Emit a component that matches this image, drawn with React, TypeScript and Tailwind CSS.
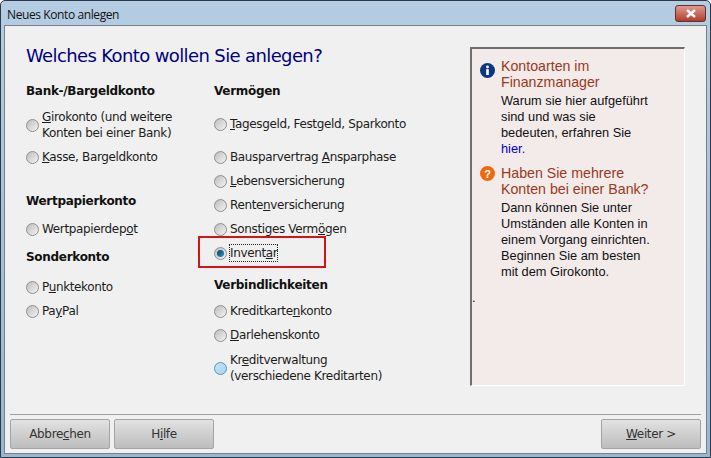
import type { ReactNode } from 'react'

const uiFont = { fontFamily: '"DejaVu Sans", sans-serif' }

function Radio({ checked, hover }: { checked?: boolean; hover?: boolean }) {
  const bg = hover
    ? 'bg-gradient-to-br from-[#c5e4f7] to-[#a3d5f2] border-[#5a93b5]'
    : 'bg-gradient-to-br from-[#bdbdbd] to-[#f4f4f4] border-[#8e8f8f]'
  return (
    <span className={`flex h-[13px] w-[13px] shrink-0 items-center justify-center rounded-full border ${bg}`}>
      {checked && <span className="h-[7px] w-[7px] rounded-full bg-gradient-to-br from-[#0f3f5f] to-[#2a9ad0]" />}
    </span>
  )
}

function Option({ children, checked, hover, className = '' }: { children: ReactNode; checked?: boolean; hover?: boolean; className?: string }) {
  return (
    <div className={`flex items-center gap-[3px] ${className}`}>
      <Radio checked={checked} hover={hover} />
      <span className="text-[12px] leading-[16px] tracking-[-0.36px] text-[#1c1c1c]">{children}</span>
    </div>
  )
}

function Heading({ children, className = '' }: { children: ReactNode; className?: string }) {
  return <div className={`text-[12px] font-bold leading-[16px] tracking-[-0.3px] text-[#111] ${className}`}>{children}</div>
}

function Btn({ children, className = '' }: { children: ReactNode; className?: string }) {
  return (
    <button className={`h-[30px] w-[100px] rounded-[2px] border border-[#a4a4a4] bg-gradient-to-b from-[#e2e2e2] to-[#bdbdbd] text-[12px] tracking-[-0.36px] text-[#333] ${className}`}>
      {children}
    </button>
  )
}

export default function App() {
  return (
    <div className="flex h-[458px] w-[711px] flex-col overflow-hidden rounded-t-[5px] border border-[#2b3a46] bg-gradient-to-b from-[#b4cde3] to-[#97b7d3]" style={uiFont}>
      <div className="flex h-[24px] shrink-0 items-start justify-between pl-[6px] pr-[4px]">
        <span className="mt-[6px] text-[12px] leading-[16px] tracking-[-0.4px] text-[#111]" style={{ fontFamily: '"Open Sans", sans-serif' }}>Neues Konto anlegen</span>
        <div className="mt-[4px] flex h-[17px] w-[31px] items-center justify-center rounded-[3px] border border-[#6b2d28] bg-gradient-to-b from-[#dd9a90] to-[#b23a2c]">
          <svg width="12" height="9" viewBox="0 0 12 9">
            <path d="M2 1l8 7M10 1L2 8" stroke="#fff" strokeWidth="2.4" />
          </svg>
        </div>
      </div>

      <div className="relative mx-[3px] mb-[3px] flex min-h-0 flex-1 flex-col border border-[#75808b] bg-[#f0f0f0]">
        <div className="flex min-h-0 flex-1">
          <div className="flex-1 pl-[21px]">
            <h1 className="mt-[18px] text-[18px] font-normal leading-[24px] tracking-[-0.62px] text-[#000080]">Welches Konto wollen Sie anlegen?</h1>
            <div className="flex">
              <div className="w-[188px]">
                <Heading className="mt-[15px]">Bank-/Bargeldkonto</Heading>
                <Option className="mt-[10px]">
                  <u>G</u>irokonto (und weitere
                  <br />
                  Konten bei einer Bank)
                </Option>
                <Option className="mt-[8px]"><u>K</u>asse, Bargeldkonto</Option>
                <Heading className="mt-[28px]">Wertpapierkonto</Heading>
                <Option className="mt-[12px]">Wertpapierdep<u>o</u>t</Option>
                <Heading className="mt-[12px]">Sonderkonto</Heading>
                <Option className="mt-[14px]">P<u>u</u>nktekonto</Option>
                <Option className="mt-[8px]">Pa<u>y</u>Pal</Option>
              </div>
              <div>
                <Heading className="mt-[15px]">Vermögen</Heading>
                <Option className="mt-[17px]"><u>T</u>agesgeld, Festgeld, Sparkonto</Option>
                <Option className="mt-[17px]">Bausparvertrag <u>A</u>nsparphase</Option>
                <Option className="mt-[8px]"><u>L</u>ebensversicherung</Option>
                <Option className="mt-[8px]">Rente<u>n</u>versicherung</Option>
                <Option className="mt-[8px]">Sonstiges Verm<u>ö</u>gen</Option>
                <Option checked className="mt-[8px]">
                  <span className="-mx-[1px] -my-[1px] inline-block h-[18px] w-[49px] border border-dotted border-[#222] leading-[16px]">Invent<u>a</u>r</span>
                </Option>
                <Heading className="mt-[16px]">Verbindlichkeiten</Heading>
                <Option className="mt-[10px]">Kreditkarte<u>n</u>konto</Option>
                <Option className="mt-[8px]"><u>D</u>arlehenskonto</Option>
                <Option hover className="mt-[9px]">
                  Kr<u>e</u>ditverwaltung
                  <br />
                  (verschiedene Kreditarten)
                </Option>
              </div>
            </div>
          </div>

          <aside className="mb-[28px] mr-[21px] mt-[21px] w-[215px] border-b border-l-2 border-r border-t-2 border-b-white border-l-[#6f6f6f] border-r-white border-t-[#6f6f6f] bg-[#f3eaea] text-[12.8px] leading-[16px] text-[#111]" style={{ fontFamily: '"Liberation Sans", sans-serif' }}>
            <div className="flex gap-[6px] pl-[8px] pr-[6px] pt-[9px]">
              <svg className="mt-[5px] shrink-0" width="15" height="15" viewBox="0 0 15 15">
                <circle cx="7.5" cy="7.5" r="7.5" fill="#0d3680" />
                <circle cx="7.5" cy="4" r="1.4" fill="#fff" />
                <rect x="6.2" y="6.2" width="2.6" height="5.8" fill="#fff" />
              </svg>
              <div>
                <div className="text-[14.2px] text-[#9a3a1a]">Kontoarten im<br />Finanzmanager</div>
                <div className="mt-[3px]">Warum sie hier aufgeführt<br />sind und was sie<br />bedeuten, erfahren Sie<br /><span className="text-[#0000cc]">hier.</span></div>
              </div>
            </div>
            <div className="flex gap-[6px] pl-[8px] pr-[6px] pt-[8px]">
              <svg className="mt-[1px] shrink-0" width="15" height="15" viewBox="0 0 15 15">
                <circle cx="7.5" cy="7.5" r="7.5" fill="#ee6a10" />
                <text x="7.5" y="11.5" textAnchor="middle" fontSize="11" fontWeight="700" fill="#fff" fontFamily="Liberation Sans">?</text>
              </svg>
              <div>
                <div className="text-[14.2px] text-[#9a3a1a]">Haben Sie mehrere<br />Konten bei einer Bank?</div>
                <div className="mt-[3px]">Dann können Sie unter<br />Umständen alle Konten in<br />einem Vorgang einrichten.<br />Beginnen Sie am besten<br />mit dem Girokonto.</div>
              </div>
            </div>
            <div className="mt-[14px] leading-[8px]">.</div>
          </aside>
        </div>

        <div className="mx-[5px] mb-[4px] shrink-0 border-t border-[#a0a0a0] pt-[4px]">
          <div className="flex gap-[4px]">
            <Btn>Abbre<u>c</u>hen</Btn>
            <Btn className="w-[99px]">H<u>i</u>lfe</Btn>
            <Btn className="ml-auto"><u>W</u>eiter &gt;</Btn>
          </div>
        </div>

        {/* red marker laid over the selected option */}
        <div className="absolute left-[193px] top-[210px] h-[32px] w-[128px] border-2 border-[#d01616]" />
      </div>
    </div>
  )
}
